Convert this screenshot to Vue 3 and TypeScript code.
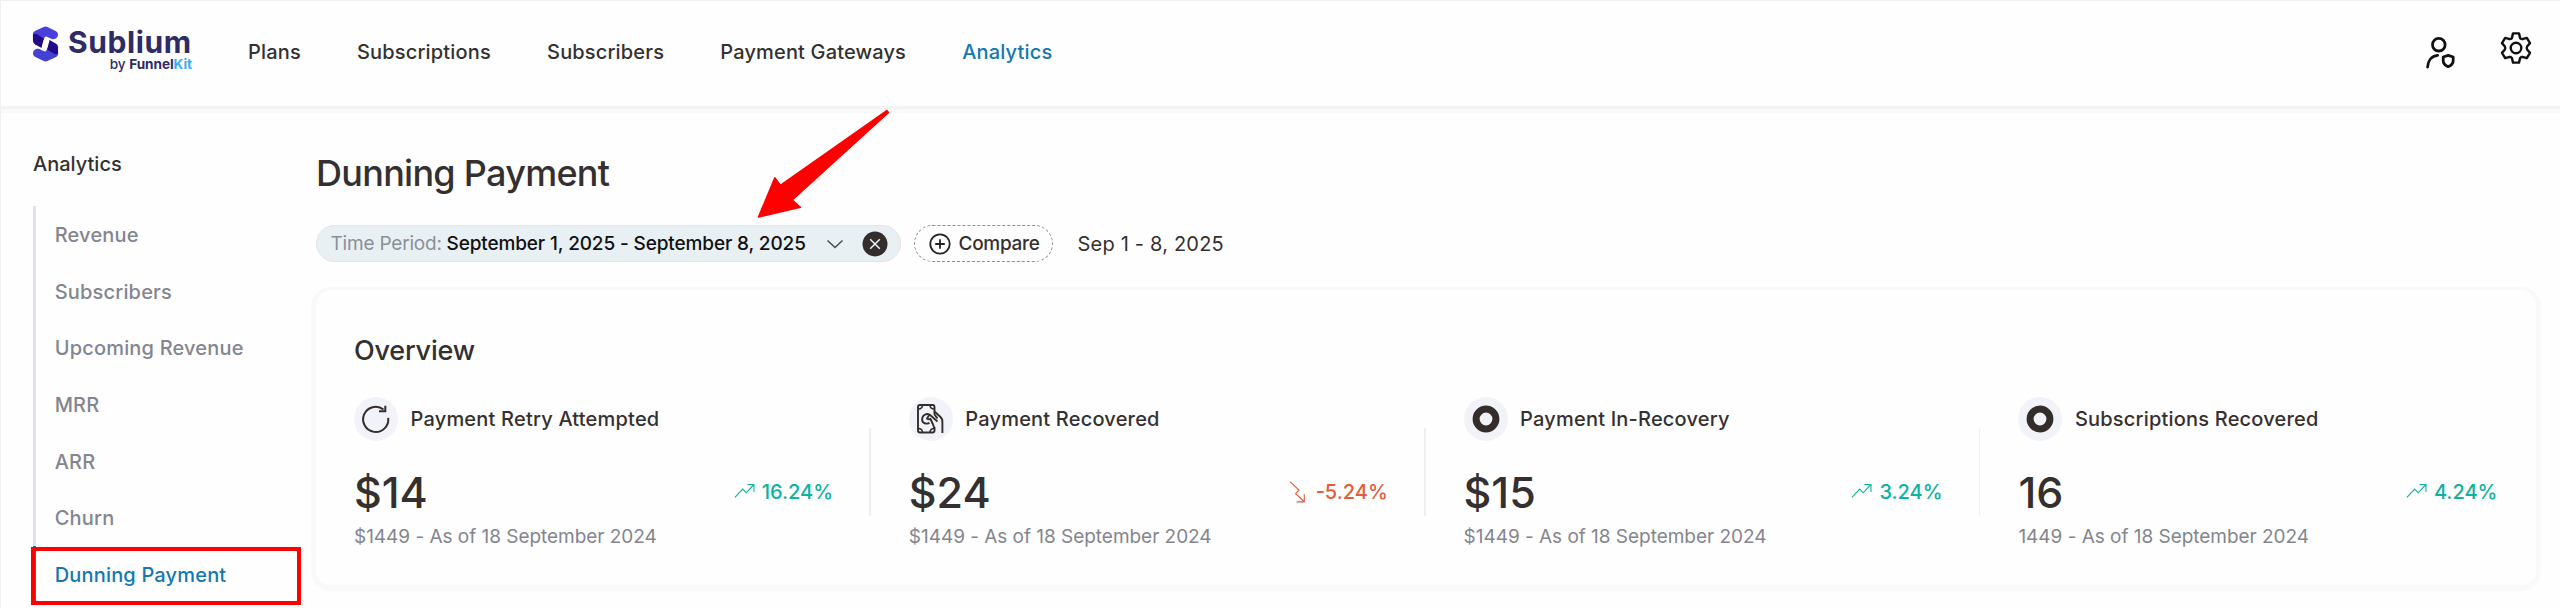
<script setup lang="ts">
interface Stat {
  icon: 'retry' | 'cash' | 'ring'
  label: string
  value: string
  note: string
  trend: string
  up: boolean
}

const nav: string[] = ['Plans', 'Subscriptions', 'Subscribers', 'Payment Gateways', 'Analytics']
const activeNav = 'Analytics'

const reports: string[] = ['Revenue', 'Subscribers', 'Upcoming Revenue', 'MRR', 'ARR', 'Churn', 'Dunning Payment']
const activeReport = 'Dunning Payment'

const stats: Stat[] = [
  { icon: 'retry', label: 'Payment Retry Attempted', value: '$14', note: '$1449 - As of 18 September 2024', trend: '16.24%', up: true },
  { icon: 'cash', label: 'Payment Recovered', value: '$24', note: '$1449 - As of 18 September 2024', trend: '-5.24%', up: false },
  { icon: 'ring', label: 'Payment In-Recovery', value: '$15', note: '$1449 - As of 18 September 2024', trend: '3.24%', up: true },
  { icon: 'ring', label: 'Subscriptions Recovered', value: '16', note: '1449 - As of 18 September 2024', trend: '4.24%', up: true },
]
</script>

<template>
  <div class="page">
    <header class="topbar">
      <a class="logo">
        <svg class="logo-mark" width="27" height="36" viewBox="0 0 28 36" preserveAspectRatio="none">
          <g>
            <path fill="#4b3fdc" d="M1 8Q1 6 3 5L12 .9Q14 0 16 .9L25 5.300Q27 6.500 27 8.500C27 11.500 24 14 20.500 13L15.500 10.700Q13.500 10 12.800 12L12 14 1 9.500Z" />
            <path fill="#230a86" d="M1 8.500Q2.500 7 5.500 8.500L12.300 12.500 9.800 22 3 18.300Q1 17 1 15Z" />
          </g>
          <g transform="rotate(180 14 18)">
            <path fill="#4540d2" d="M1 8Q1 6 3 5L12 .9Q14 0 16 .9L25 5.300Q27 6.500 27 8.500C27 11.500 24 14 20.500 13L15.500 10.700Q13.500 10 12.800 12L12 14 1 9.500Z" />
            <path fill="#230a86" d="M1 8.500Q2.500 7 5.500 8.500L12.300 12.500 9.800 22 3 18.300Q1 17 1 15Z" />
          </g>
        </svg>
        <span class="logo-text">
          <span class="logo-name">Sublium</span>
          <span class="logo-by">by <b>Funnel</b><b class="kit">Kit</b></span>
        </span>
      </a>
      <nav class="nav">
        <a v-for="item in nav" :key="item" :class="{ active: item === activeNav }">{{ item }}</a>
      </nav>
      <div class="tools">
        <svg width="32" height="34" viewBox="0 0 32 34" fill="none" stroke="#111" stroke-width="2.8" stroke-linecap="round" stroke-linejoin="round">
          <circle cx="13.8" cy="9.7" r="6.3" />
          <path d="M2.600 32C3 26 6.500 21 12.600 20.400" />
          <path d="M23.200 20.300 28.200 22V25.500C28.200 28.500 26.200 30.500 23.200 31.600 20.200 30.500 18.200 28.500 18.200 25.500V22Z" />
        </svg>
        <svg class="gear" width="32" height="32" viewBox="0 0 32 32" fill="none" stroke="#111" stroke-width="2.4" stroke-linejoin="round">
          <path d="M13 1.400H19L20 5.600Q20.200 6.400 21 6.800L22.200 7.200 26.800 5.900 30 11.100 27.300 14.200Q26.200 16 27.300 17.800L30 20.900 26.800 26.100 22.200 24.800 21 25.200Q20.200 25.600 20 26.400L19 30.600H13L12 26.400Q11.800 25.600 11 25.200L9.800 24.800 5.200 26.100 2 20.900 4.700 17.800Q5.800 16 4.700 14.200L2 11.100 5.200 5.900 9.800 7.200 11 6.800Q11.800 6.400 12 5.600Z" />
          <circle cx="16" cy="16" r="5.3" />
        </svg>
      </div>
    </header>

    <div class="body">
      <aside class="sidebar">
        <h2>Analytics</h2>
        <ul>
          <li v-for="item in reports" :key="item" :class="{ active: item === activeReport }">{{ item }}</li>
        </ul>
        <div class="highlight"></div>
      </aside>

      <main class="main">
        <h1>Dunning Payment</h1>
        <div class="filters">
          <div class="period">
            <span class="period-label">Time Period:</span>
            <span class="period-value">September 1, 2025 - September 8, 2025</span>
            <svg class="chevron" width="18" height="10" viewBox="0 0 18 10" fill="none" stroke="#4b4b4f" stroke-width="1.5"><path d="M1.500 1.500 9 8.500 16.500 1.500" /></svg>
            <svg class="clear" width="26" height="26" viewBox="0 0 26 26"><circle cx="13" cy="13" r="12.5" fill="#332e2c" /><path d="M8.200 8.200 17.800 17.800M17.800 8.200 8.200 17.800" stroke="#f2f2f2" stroke-width="1.5" /></svg>
          </div>
          <div class="compare">
            <svg width="22" height="22" viewBox="0 0 22 22" fill="none" stroke="#222" stroke-width="1.8"><circle cx="11" cy="11" r="9.7" /><path d="M11 6.200V15.800M6.200 11H15.800" /></svg>
            <span>Compare</span>
          </div>
          <span class="range">Sep 1 - 8, 2025</span>
        </div>

        <section class="card">
          <h3>Overview</h3>
          <div class="stats">
            <template v-for="(s, i) in stats" :key="s.label">
              <div v-if="i > 0" class="divider"></div>
              <div class="stat">
                <div class="stat-head">
                  <svg width="44" height="44" viewBox="0 0 44 44" fill="none" stroke="#332e2c">
                    <circle cx="22" cy="22" r="22" fill="#f1f3f9" stroke="none" />
                    <g v-if="s.icon === 'retry'" stroke-width="2">
                      <path d="M34.200 20.800A12.600 12.600 0 1 1 29.500 12.500" />
                      <path d="M31.300 8.800V14.300H25" />
                    </g>
                    <g v-else-if="s.icon === 'cash'" stroke-width="1.9" stroke-linejoin="round">
                      <path d="M25.500 12V10Q25.500 8 23.500 8H11Q9 8 9 10V33.500Q9 35.500 11 35.500H23.500Q25.500 35.500 25.500 33.500V30" />
                      <path d="M13.500 8Q13.500 12 9 12M21 8Q21 12 25.500 12M13.500 35.500Q13.500 31.500 9 31.500M21 35.500Q21 31.500 25.500 31.500" stroke-width="1.6" />
                      <path d="M25.500 12V14.500L31.500 20Q33.400 22 33.400 24.500V36" />
                      <path d="M25.500 14.500V17.500L28.500 21.500M28.500 24.500 20.500 17.500Q17.500 16.200 14.800 18.400 12 21.500 13.800 25 16.500 27.800 20.500 25.800M20.500 17.500 18 21.500Q19.500 22.800 21.500 22L23.800 27 25.500 31.500" />
                    </g>
                    <circle v-else cx="22" cy="22" r="9.9" stroke-width="7" />
                  </svg>
                  <span>{{ s.label }}</span>
                </div>
                <div class="stat-row">
                  <span class="value">{{ s.value }}</span>
                  <span class="trend" :class="s.up ? 'up' : 'down'">
                    <svg v-if="s.up" class="rise" width="22" height="17" viewBox="0 0 24 18" fill="none" stroke="currentColor" stroke-width="1.2"><path d="M1 16.500 9.500 7.500 13.300 11.500 21.300 3M14.500 2.500H21.800V10.500" /></svg>
                    <svg v-else class="fall" width="17" height="24" viewBox="0 0 18 24" fill="none" stroke="currentColor" stroke-width="1.2"><path d="M1 1 10.500 10 7 13.800 15.800 21.800M8 22.500H16.200V14.500" /></svg>
                    {{ s.trend }}
                  </span>
                </div>
                <div class="note">{{ s.note }}</div>
              </div>
            </template>
          </div>
        </section>
      </main>
    </div>

    <svg class="pointer" width="136" height="114" viewBox="756 107 136 114">
      <path d="M886.800 110.500 780.300 185.300 774.800 177.800 758.500 217 800.300 207.300 792.300 200 888.500 112.500Z" fill="#f00" stroke="#f00" stroke-width="1.5" stroke-linejoin="round" />
    </svg>
  </div>
</template>

<style>
body {
  margin: 0;
  background: #fefefe;
}
</style>

<style scoped>
.page {
  position: relative;
  box-sizing: border-box;
  width: 2560px;
  height: 608px;
  overflow: hidden;
  border-top: 1px solid #f0f0f0;
  border-left: 1px solid #f0f0f0;
  background: #fefefe;
  color: #353030;
  font-family: Inter, "Liberation Sans", sans-serif;
  font-size: 20px;
  font-weight: 500;
  white-space: nowrap;
}
h1,
h2,
h3,
ul {
  margin: 0;
  padding: 0;
  font-weight: 500;
}
.topbar {
  display: flex;
  align-items: flex-start;
  box-sizing: border-box;
  height: 108px;
  padding-left: 31px;
  padding-right: 28px;
  border-bottom: 3px solid #f3f3f3;
  box-shadow: 0 4px 0 #faf9f9;
}
.logo {
  display: flex;
  width: 216px;
}
.logo-mark {
  margin-top: 25px;
}
.logo-text {
  display: flex;
  flex-direction: column;
  width: 124px;
  margin: 23px 0 0 9px;
  color: #2f2b65;
}
.logo-name {
  font-size: 30px;
  line-height: 36px;
  font-weight: 700;
  letter-spacing: 0.6px;
}
.logo-by {
  align-self: flex-end;
  margin-top: -5.5px;
  font-size: 13.6px;
  line-height: 18px;
  letter-spacing: -0.05px;
}
.logo-by .kit {
  color: #36abff;
}
.nav {
  display: flex;
  gap: 56.2px;
  margin-top: 38px;
  line-height: 26px;
  letter-spacing: 0.16px;
}
.active {
  color: #1478b0;
}
.tools {
  display: flex;
  gap: 43px;
  margin: 34px 0 0 auto;
}
.gear {
  margin-top: -3px;
}
.body {
  display: flex;
}
.sidebar {
  position: relative;
  width: 315px;
  flex: none;
}
.sidebar h2 {
  margin: 42px 0 0 32px;
  font-size: 20px;
  line-height: 26px;
}
.sidebar ul {
  margin: 29px 0 0 32px;
  list-style: none;
}
.sidebar li {
  height: 56.7px;
  padding-left: 18.7px;
  border-left: 3px solid #dfe2ec;
  line-height: 58px;
  letter-spacing: 0.18px;
  color: #84858f;
}
.sidebar li.active {
  border-color: #1478b0;
  color: #1478b0;
}
.highlight {
  position: absolute;
  left: 30px;
  top: 438px;
  width: 262px;
  height: 50px;
  border: 4px solid #f00;
}
.main {
  flex: 1;
}
h1 {
  margin-top: 41px;
  font-size: 36px;
  font-weight: 550;
  line-height: 46px;
  letter-spacing: -0.72px;
}
.filters {
  display: flex;
  align-items: center;
  margin-top: 29px;
  height: 37px;
}
.period {
  display: flex;
  align-items: center;
  box-sizing: border-box;
  width: 585px;
  height: 37px;
  padding-left: 13.5px;
  border: 1px solid #dde6eb;
  border-radius: 19px;
  background: #e8f0f4;
  font-size: 19px;
}
.period-label {
  width: 116px;
  color: #8b9097;
  font-weight: 400;
  letter-spacing: -0.2px;
}
.period-value {
  width: 379px;
  color: #111;
  letter-spacing: -0.13px;
}
.clear {
  margin-left: 18px;
}
.compare {
  display: flex;
  align-items: center;
  gap: 8px;
  box-sizing: border-box;
  width: 139.5px;
  height: 37px;
  margin-left: 12.5px;
  padding-left: 14px;
  border: 1.5px dashed #8d8d8d;
  border-radius: 19px;
  font-size: 19px;
  font-weight: 450;
  letter-spacing: -0.3px;
}
.range {
  margin-left: 24.5px;
  font-weight: 400;
  letter-spacing: 0.2px;
}
.card {
  box-sizing: border-box;
  width: 2230px;
  height: 304px;
  margin: 25px 0 0 -5px;
  padding: 45px 0 0 38px;
  border: 5px solid #f8f9f9;
  border-top-width: 3px;
  border-bottom-width: 6px;
  border-radius: 20px;
}
h3 {
  font-size: 27px;
  line-height: 32px;
  letter-spacing: -0.2px;
}
.stats {
  display: flex;
  margin-top: 30px;
}
.stat {
  width: 479px;
  flex: none;
}
.divider {
  width: 1.8px;
  height: 88px;
  margin: 31px 38px 0 36px;
  flex: none;
  background: #f0f0f1;
}
.stat-head {
  display: flex;
  align-items: center;
  gap: 12.5px;
  letter-spacing: 0.2px;
}
.stat-row {
  display: flex;
  align-items: center;
  justify-content: space-between;
  height: 56px;
  margin-top: 22.5px;
}
.value {
  font-size: 43px;
}
.trend {
  display: flex;
  align-items: center;
  gap: 6px;
}
.trend .rise {
  margin-top: -3px;
}
.trend .fall {
  margin-right: 4px;
}
.up {
  color: #0db39e;
}
.down {
  color: #e45a3c;
}
.note {
  margin-top: 4px;
  font-size: 19px;
  line-height: 25px;
  font-weight: 400;
  letter-spacing: -0.03px;
  color: #84858f;
}
.pointer {
  position: absolute;
  left: 755px;
  top: 106px;
}
</style>
